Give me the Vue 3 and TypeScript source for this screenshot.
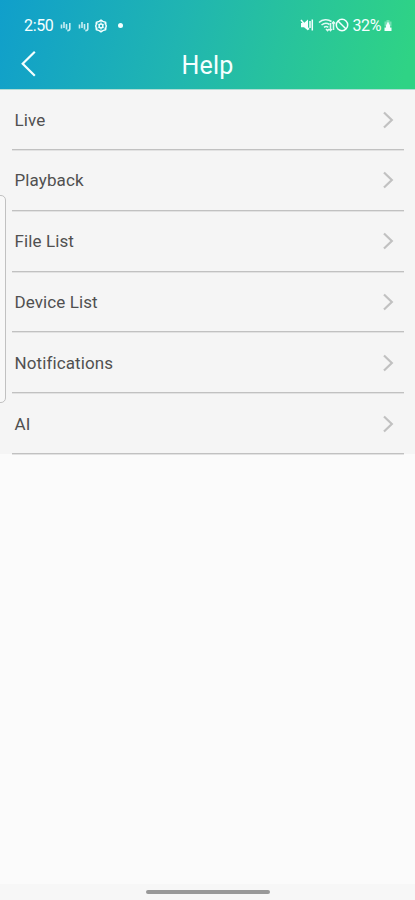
<script setup lang="ts">
const items: string[] = ['Live', 'Playback', 'File List', 'Device List', 'Notifications', 'AI']
</script>

<template>
  <main class="screen">
    <header class="header">
      <div class="status">
        <div class="status-left">
          <span class="time">2:50</span>
          <svg v-for="n in 2" :key="n" class="motion" viewBox="0 0 12 12" aria-hidden="true">
            <path d="M1.500 4.500v4M4 2v6M6.500 4v5.500M9.800 3v6q0 1.600-2.500 1.600" />
          </svg>
          <svg class="gear" viewBox="0 0 14 14" aria-hidden="true">
            <path d="M7 1.200 8.800 2.400l2.800.9.300 2.600.4 1.100-.4 1.100-.3 2.600-2.800.9L7 12.800l-1.800-1.200-2.800-.9-.3-2.600L1.700 7l.4-1.100.3-2.600 2.800-.9Z" />
            <circle cx="7" cy="7" r="1.900" />
            <path d="M7 2v3M7 9v3M3 4.500l2 1.200M9 8.300l2 1.200M3 9.500l2-1.200M9 5.700l2-1.200" class="spokes" />
          </svg>
          <span class="dot"></span>
        </div>
        <div class="status-right">
          <svg class="mute" viewBox="0 0 14 14" aria-hidden="true">
            <path d="M1 5h3l4-3.500v11L4 9.200H1Z" fill="currentColor" />
            <path d="m1 2 8 9.500M10 3v7M12.300 1.500v11" fill="none" stroke="currentColor" stroke-width="1.500" />
          </svg>
          <svg class="wifi" viewBox="0 0 18 14" aria-hidden="true">
            <path d="M1 4.500C4.500 1.200 10 1 13.500 3.500M3.500 7c2.500-2 5.500-2.200 8-.5M6 9.300c1.300-1 3-1 4.300 0" />
            <path d="m8 11 1.600 1.500L11 11M12.500 5v7.500M15.500 12V4M14 5.500 15.500 4 17 5.500M11.300 11l1.200 1.500 1.300-1.500" />
          </svg>
          <svg class="blocked" viewBox="0 0 14 14" aria-hidden="true">
            <circle cx="7" cy="7" r="5.700" />
            <path d="m3.200 3.200 7.600 7.600" />
          </svg>
          <span class="percent">32%</span>
          <svg class="battery" viewBox="0 0 9 13" aria-hidden="true">
            <path d="M3 1h3v1.500h2v5H1v-5h2Z" fill="currentColor" opacity=".35" />
            <path d="M4.500 2.500 2.500 6.500v2h4v-2ZM1 8.500h7V12H1Z" fill="currentColor" />
          </svg>
        </div>
      </div>
      <div class="titlebar">
        <button class="back" aria-label="Back">
          <svg viewBox="0 0 16 28"><path d="M13.800 1.800 1.700 13.700l12.100 12" /></svg>
        </button>
        <h1>Help</h1>
      </div>
    </header>
    <nav class="list">
      <a v-for="item in items" :key="item" class="row">
        <span>{{ item }}</span>
        <svg viewBox="0 0 12 18" aria-hidden="true"><path d="m2 1.500 7.800 7.500L2 16.500" /></svg>
      </a>
    </nav>
    <div class="edge-panel"></div>
    <footer class="navigation"><span></span></footer>
  </main>
</template>

<style>
body { margin: 0; background: #fbfbfb; }
</style>

<style scoped>
.screen {
  position: relative;
  display: flex;
  flex-direction: column;
  width: 100%;
  height: 900px;
  overflow: hidden;
  background: #fbfbfb;
  font-family: Roboto, sans-serif;
}
.header {
  box-sizing: border-box;
  flex: none;
  height: 90px;
  border-bottom: 1px solid #b2ddd5;
  color: #f5ffff;
  background: linear-gradient(105deg, #109fcb 0%, #20b5b1 43%, #27c29e 66%, #2fd385 97%);
}
.status {
  display: flex;
  justify-content: space-between;
  height: 40px;
  box-sizing: border-box;
  padding: 11px 22.500px 0 24px;
}
.status-left, .status-right { display: flex; align-items: center; height: 29px; }
.status-right { height: 28px; }
.time { width: 35.500px; font-size: 16px; letter-spacing: -.35px; }
svg { display: block; flex: none; }
.motion { width: 12px; height: 12px; margin-right: 6px; }
.motion path { fill: none; stroke: currentColor; stroke-width: 1.600; opacity: .8; }
.gear { width: 14px; height: 14px; margin-left: -1.500px; fill: none; stroke: currentColor; stroke-width: 1.500; }
.spokes { stroke-width: .7; }
.dot { width: 5px; height: 5px; margin-left: 9.500px; border-radius: 50%; background: currentColor; }
.mute { width: 14px; height: 14px; margin-right: 4px; }
.wifi { width: 18px; height: 14px; margin-right: -.5px; fill: none; stroke: currentColor; stroke-width: 1.600; opacity: .9; }
.blocked { width: 14px; height: 14px; margin-right: 3.500px; fill: none; stroke: currentColor; stroke-width: 1.500; }
.percent { width: 30px; font-size: 16px; letter-spacing: -.4px; }
.battery { width: 10px; height: 13px; }
.titlebar {
  display: grid;
  grid-template-columns: 60px 1fr 60px;
  height: 49px;
}
.back { display: flex; align-items: flex-start; padding: 10px 0 0 21px; border: 0; background: none; color: inherit; }
.back svg { width: 16px; height: 28px; fill: none; stroke: currentColor; stroke-width: 2.200; }
h1 { margin: 0; padding-top: 1px; font-size: 25px; line-height: 49px; font-weight: 400; letter-spacing: .15px; text-align: center; }
.list { flex: none; padding: 0 11px 0 12px; background: #f5f5f5; }
.row {
  box-sizing: border-box;
  display: flex;
  align-items: center;
  justify-content: space-between;
  height: 60.800px;
  padding: 1px 10.500px 0 2.500px;
  border-bottom: 1px solid #c1c1c1;
  box-shadow: 0 1px 0 #e2e2e2;
  color: #505050;
  font-size: 17px;
  letter-spacing: .1px;
}
.row:first-child { height: 60px; padding-top: 0; }
.row svg { width: 12px; height: 18px; fill: none; stroke: #c1c1c1; stroke-width: 2.200; }
.edge-panel {
  position: absolute;
  top: 195px;
  left: -8px;
  box-sizing: border-box;
  width: 14px;
  height: 208px;
  border: 1px solid #c1c1c1;
  border-radius: 5px;
  background: #f8f8f8;
}
.navigation {
  display: flex;
  justify-content: center;
  height: 16px;
  margin-top: auto;
  background: #f7f7f7;
}
.navigation span { width: 124px; height: 4px; margin-top: 6px; border-radius: 2px; background: #999; }
</style>
